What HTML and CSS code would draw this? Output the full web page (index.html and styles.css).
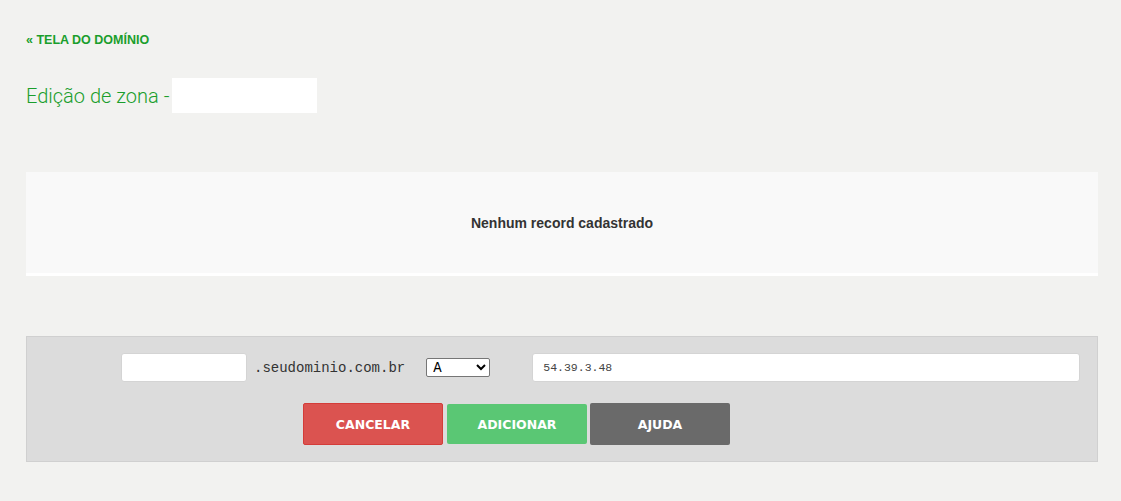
FILE: index.html
```html
<!DOCTYPE html>
<html lang="pt-BR">
<head>
    <meta charset="UTF-8">
    <meta name="viewport" content="width=device-width, initial-scale=1.0">
    <title>Edição de zona</title>
    <link rel="stylesheet" href="styles.css">
</head>
<body>
    <div class="page">
        <!-- Voltar -->
        <a class="back" href="#">&laquo; TELA DO DOMÍNIO</a>

        <!-- Titulo -->
        <div class="title-row">
            <h1>Edição de zona -</h1>
            <span class="domain-box"></span>
        </div>

        <!-- Lista de records -->
        <div class="records">
            <p>Nenhum record cadastrado</p>
        </div>

        <!-- Formulario -->
        <form class="record-form">
            <div class="form-row">
                <input type="text" class="name-input">
                <span class="suffix">.seudominio.com.br</span>
                <select class="type-select">
                    <option>A</option>
                    <option>AAAA</option>
                    <option>CNAME</option>
                    <option>MX</option>
                    <option>TXT</option>
                </select>
                <input type="text" class="value-input" value="54.39.3.48">
            </div>
            <div class="button-row">
                <button type="button" class="btn btn-cancel">CANCELAR</button>
                <button type="button" class="btn btn-add">ADICIONAR</button>
                <button type="button" class="btn btn-help">AJUDA</button>
            </div>
        </form>
    </div>
</body>
</html>
```

FILE: styles.css
```css
/* Geral */
body {
    margin: 0;
    padding: 0;
    background-color: #f2f2f0;
    font-family: "Liberation Sans", Arial, sans-serif;
    color: #333;
}

.page {
    padding: 33px 23px 0 26px;
}

/* Link de volta */
.back {
    display: block;
    font-size: 12.5px;
    line-height: 14px;
    font-weight: bold;
    color: #1a9e2c;
    text-decoration: none;
}

/* Titulo */
.title-row {
    display: flex;
    align-items: center;
    margin-top: 31px;
}

.title-row h1 {
    margin: 0 3px 0 0;
    font-family: Roboto, "Liberation Sans", sans-serif;
    font-size: 20px;
    font-weight: 300;
    color: #1a9e2c;
}

.domain-box {
    display: block;
    width: 145px;
    height: 35px;
    background-color: #fff;
}

/* Tabela de records */
.records {
    margin-top: 59px;
    height: 101px;
    background-color: #f9f9f9;
    border-bottom: 3px solid #fff;
    display: flex;
    align-items: center;
    justify-content: center;
}

.records p {
    margin: 0;
    font-size: 14px;
    font-weight: bold;
    color: #333;
}

/* Formulario */
.record-form {
    margin-top: 60px;
    background-color: #dcdcdc;
    border: 1px solid #d0d0d0;
    padding: 16px 0 16px 0;
}

.form-row {
    display: flex;
    align-items: center;
    padding-left: 94px;
}

.name-input,
.value-input {
    box-sizing: border-box;
    height: 29px;
    border: 1px solid #d4d4d4;
    border-radius: 3px;
    background-color: #fff;
    outline: none;
}

.name-input {
    width: 126px;
}

.suffix {
    margin-left: 7px;
    font-family: "Liberation Mono", "Courier New", monospace;
    font-size: 14px;
    color: #333;
}

.type-select {
    box-sizing: border-box;
    width: 64px;
    height: 19px;
    margin-left: 21px;
    font-family: "Liberation Mono", "Courier New", monospace;
    font-size: 14px;
    color: #000;
    background-color: #fff;
    border: 1px solid #767676;
    border-radius: 2px;
    padding: 0 0 0 2px;
}

.value-input {
    width: 548px;
    margin-left: 42px;
    padding-left: 10px;
    font-family: "Liberation Mono", "Courier New", monospace;
    font-size: 11.5px;
    color: #444;
}

/* Botoes */
.button-row {
    display: flex;
    align-items: center;
    padding-left: 276px;
    margin-top: 21px;
}

.btn {
    width: 140px;
    height: 42px;
    border: none;
    border-radius: 2px;
    color: #fff;
    font-family: "DejaVu Sans", Verdana, sans-serif;
    font-size: 12.5px;
    font-weight: bold;
    cursor: pointer;
}

.btn-cancel {
    background-color: #db5350;
    border: 1px solid #d43c39;
}

.btn-add {
    height: 40px;
    margin-left: 4px;
    background-color: #5ac774;
}

.btn-help {
    margin-left: 3px;
    background-color: #6a6a6a;
}
```
